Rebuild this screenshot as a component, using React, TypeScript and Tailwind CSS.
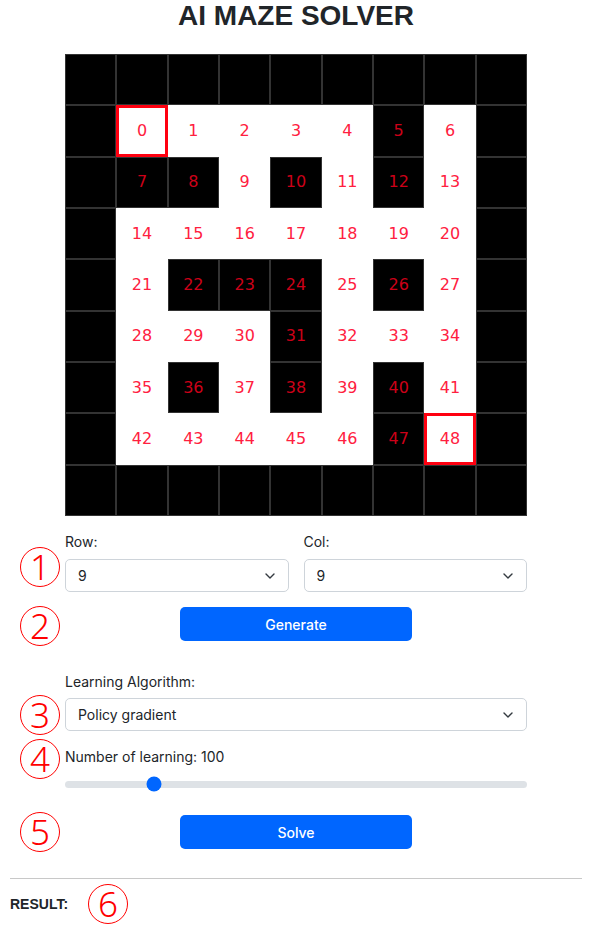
import React, { useState } from "react";

// 1 = wall, 0 = path (inner 7x7, numbered 0..48)
const MAZE = [
    [0, 0, 0, 0, 0, 1, 0],
    [1, 1, 0, 1, 0, 1, 0],
    [0, 0, 0, 0, 0, 0, 0],
    [0, 1, 1, 1, 0, 1, 0],
    [0, 0, 0, 1, 0, 0, 0],
    [0, 1, 0, 1, 0, 1, 0],
    [0, 0, 0, 0, 0, 1, 0],
];

const FONT = { fontFamily: '"Liberation Sans", Arial, sans-serif' };
const UI_FONT = { fontFamily: 'Inter, "Liberation Sans", sans-serif' };

function Mark({ n }: { n: string }) {
    return (
        <div className="w-[40px] h-[40px] rounded-full border-[1.5px] border-[#ff0000] flex items-center justify-center text-[#ff0000] text-[35px] leading-none font-light" style={{ fontFamily: '"Noto Sans", "Liberation Sans", sans-serif' }}>
            <span className="-mt-[2px]">{n}</span>
        </div>
    );
}

function Chevron() {
    return (
        <svg className="pointer-events-none absolute right-[14px] top-1/2 -translate-y-1/2" width="10" height="6" viewBox="0 0 10 6" fill="none">
            <path d="M1 1l4 4 4-4" stroke="#343a40" strokeWidth="1.4" strokeLinecap="round" strokeLinejoin="round" />
        </svg>
    );
}

function Select({ value, options }: { value: string; options: string[] }) {
    return (
        <div className="relative">
            <select
                defaultValue={value}
                className="appearance-none w-full h-[33px] rounded-[5px] border border-[#ced4da] bg-white pl-[12px] pr-[36px] text-[14px] text-[#212529] outline-none"
                style={UI_FONT}
            >
                {options.map((o) => <option key={o}>{o}</option>)}
            </select>
            <Chevron />
        </div>
    );
}

function MazeGrid() {
    const cells = [];
    for (let r = 0; r < 9; r++) {
        for (let c = 0; c < 9; c++) {
            const inner = r > 0 && r < 8 && c > 0 && c < 8;
            const wall = !inner || MAZE[r - 1][c - 1] === 1;
            const num = inner ? (r - 1) * 7 + (c - 1) : null;
            const special = num === 0 || num === 48;
            let cls = "flex items-center justify-center text-[16px] ";
            if (wall) cls += "bg-black border border-[#333333] text-[#cc0018]";
            else if (special) cls += "bg-white border-[3px] border-[#ff0010] text-[#ff2040]";
            else cls += "bg-white text-[#ff2040]";
            cells.push(
                <div key={`${r}-${c}`} className={cls}>
                    {num !== null ? num : ""}
                </div>
            );
        }
    }
    return (
        <div className="grid grid-cols-9 grid-rows-9 w-[462px] h-[462px]" style={{ fontFamily: '"DejaVu Sans", Verdana, sans-serif' }}>
            {cells}
        </div>
    );
}

export default function App() {
    const [learnCount] = useState(100);
    const pct = (learnCount - 10) / 490;

    return (
        <div className="w-[599px] min-h-[931px] bg-white px-[10px] text-[#212529]" style={FONT}>
            <div className="w-[572px]">
                <h1 className="pt-[2px] text-center text-[28px] leading-[28px] font-bold text-[#212529]">AI MAZE SOLVER</h1>

                <div className="w-[462px] mx-auto mt-[24px]">
                    <MazeGrid />

                    {/* Row / Col */}
                    <div className="relative mt-[16px] grid grid-cols-2 gap-[15px]" style={UI_FONT}>
                        <div className="absolute left-[-45px] top-[15px]"><Mark n="1" /></div>
                        <div>
                            <label className="block text-[14px] leading-[20px] mb-[7px]">Row:</label>
                            <Select value="9" options={["5", "7", "9", "11", "13"]} />
                        </div>
                        <div>
                            <label className="block text-[14px] leading-[20px] mb-[7px]">Col:</label>
                            <Select value="9" options={["5", "7", "9", "11", "13"]} />
                        </div>
                    </div>

                    {/* Generate */}
                    <div className="relative mt-[15px] flex justify-center">
                        <div className="absolute left-[-45px] top-[-1px]"><Mark n="2" /></div>
                        <button className="w-[232px] h-[34px] rounded-[5px] bg-[#0066ff] text-white text-[14px] font-medium" style={UI_FONT}>Generate</button>
                    </div>

                    {/* Algorithm */}
                    <div className="relative mt-[31px]" style={UI_FONT}>
                        <div className="absolute left-[-45px] top-[23px]"><Mark n="3" /></div>
                        <label className="block text-[14px] leading-[20px] mb-[6px]">Learning Algorithm:</label>
                        <Select value="Policy gradient" options={["Policy gradient", "Q-learning", "SARSA"]} />
                    </div>

                    {/* Learning count */}
                    <div className="relative mt-[16px]" style={UI_FONT}>
                        <div className="absolute left-[-45px] top-[-8px]"><Mark n="4" /></div>
                        <label className="block text-[14px] leading-[20px]">Number of learning: {learnCount}</label>
                        <div className="relative mt-[9px] h-[16px] flex items-center">
                            <div className="w-full h-[7px] rounded-full bg-[#dee2e6]" />
                            <div
                                className="absolute top-1/2 -translate-y-1/2 -translate-x-1/2 w-[15px] h-[15px] rounded-full bg-[#0066ff]"
                                style={{ left: `calc(7px + ${pct} * (100% - 14px))` }}
                            />
                        </div>
                    </div>

                    {/* Solve */}
                    <div className="relative mt-[23px] flex justify-center">
                        <div className="absolute left-[-45px] top-[-3px]"><Mark n="5" /></div>
                        <button className="w-[232px] h-[34px] rounded-[5px] bg-[#0066ff] text-white text-[14px] font-medium" style={UI_FONT}>Solve</button>
                    </div>
                </div>

                <hr className="mt-[29px] border-0 border-t border-[#c8c8c8]" />

                <div className="relative mt-[15px] flex items-center h-[20px]">
                    <span className="text-[14px] font-bold leading-[20px]">RESULT:</span>
                    <div className="absolute left-[78px] top-[-10px]"><Mark n="6" /></div>
                </div>
            </div>
        </div>
    );
}
